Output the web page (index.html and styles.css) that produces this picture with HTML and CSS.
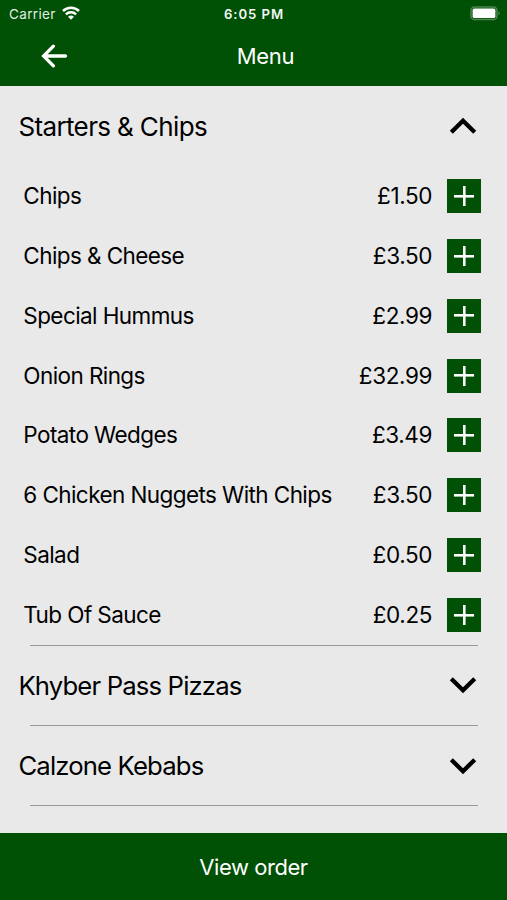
FILE: index.html
```html
<!DOCTYPE html>
<html lang="en">
<head>
<meta charset="utf-8">
<title>Menu</title>
<link rel="stylesheet" href="styles.css">
</head>
<body>
<header class="top">
  <div class="status">
    <div class="carrier"><span class="carrier-name">Carrier</span>
      <svg class="wifi" width="18" height="14" viewBox="0 0 18 14"><g fill="none" stroke="#fff" stroke-width="2.5"><path d="M1 5a11.5 11.5 0 0 1 16 0"/><path d="M3.9 8.3a7.4 7.4 0 0 1 10.2 0"/></g><path d="M9 13.8 6 10.8a4.4 4.4 0 0 1 6 0z" fill="#fff"/></svg>
    </div>
    <time class="clock">6:05 PM</time>
    <svg class="battery" width="31" height="15" viewBox="0 0 31 15"><rect x="1" y="1" width="26" height="12.6" rx="3.6" fill="none" stroke="#4d8751" stroke-width="1.5"/><rect x="2.6" y="2.6" width="22.8" height="9.4" rx="1.6" fill="#fff"/><path d="M28.5 5q2.6 2.3 0 4.6z" fill="#4d8751"/></svg>
  </div>
  <div class="nav">
    <svg class="back" width="28" height="24" viewBox="0 0 28 24"><path d="M25.5 12H4M13.4 2.2 3.6 12l9.8 9.8" fill="none" stroke="#fff" stroke-width="3.3" stroke-linecap="round"/></svg>
    <h1 class="title">Menu</h1>
  </div>
</header>
<main class="menu">
  <section class="group open">
    <h2 class="heading starters"><span>Starters &amp; Chips</span><svg class="chevron" width="28" height="18" viewBox="0 0 28 18"><path d="M2.3 15.3 14 3.8 25.7 15.3" fill="none" stroke="#000" stroke-width="4.3"/></svg></h2>
    <ul class="items">
      <li class="item"><span class="name">Chips</span><span class="price">£1.50</span><button class="add" aria-label="Add"></button></li>
      <li class="item"><span class="name">Chips &amp; Cheese</span><span class="price">£3.50</span><button class="add" aria-label="Add"></button></li>
      <li class="item"><span class="name">Special Hummus</span><span class="price">£2.99</span><button class="add" aria-label="Add"></button></li>
      <li class="item"><span class="name">Onion Rings</span><span class="price">£32.99</span><button class="add" aria-label="Add"></button></li>
      <li class="item"><span class="name">Potato Wedges</span><span class="price">£3.49</span><button class="add" aria-label="Add"></button></li>
      <li class="item"><span class="name">6 Chicken Nuggets With Chips</span><span class="price">£3.50</span><button class="add" aria-label="Add"></button></li>
      <li class="item"><span class="name">Salad</span><span class="price">£0.50</span><button class="add" aria-label="Add"></button></li>
      <li class="item"><span class="name">Tub Of Sauce</span><span class="price">£0.25</span><button class="add" aria-label="Add"></button></li>
    </ul>
  </section>
  <section class="group"><h2 class="heading"><span>Khyber Pass Pizzas</span><svg class="chevron" width="28" height="18" viewBox="0 0 28 18"><path d="M2.3 2.7 14 14.2 25.7 2.7" fill="none" stroke="#000" stroke-width="4.3"/></svg></h2></section>
  <section class="group"><h2 class="heading"><span>Calzone Kebabs</span><svg class="chevron" width="28" height="18" viewBox="0 0 28 18"><path d="M2.3 2.7 14 14.2 25.7 2.7" fill="none" stroke="#000" stroke-width="4.3"/></svg></h2></section>
</main>
<footer class="order">View order</footer>
</body>
</html>
```
FILE: styles.css
```css
* { box-sizing: border-box; }
body { margin: 0; height: 900px; display: flex; flex-direction: column; overflow: hidden; background: #e9e9e9; color: #000; font-family: Inter, "Liberation Sans", sans-serif; }
.top { height: 86px; background: #005005; color: #fff; flex: none; }
.status { height: 27px; display: grid; grid-template-columns: 1fr auto 1fr; align-items: center; padding: 0 7px 0 9px; }
.carrier { display: flex; align-items: center; gap: 6px; font-size: 13.5px; letter-spacing: .35px; color: #e2eee2; }
.wifi { margin-top: -1px; }
.clock { font-size: 13.2px; font-weight: 600; letter-spacing: .9px; margin-left: -1px; color: #f2f8f2; }
.battery { justify-self: end; margin: -1px -1px 0 0; }
.nav { height: 58px; display: grid; grid-template-columns: 68px 1fr 44px; align-items: center; }
.back { margin-left: 40px; }
.title { margin: 0; text-align: center; font-size: 22px; font-weight: 400; letter-spacing: -.3px; }
.menu { flex: 1; padding-top: .4px; }
.group { height: 80.2px; }
.group.open { height: 559px; }
.heading { margin: 0; height: 80.2px; padding: 0 30px 0 18.4px; display: flex; align-items: center; justify-content: space-between; font-size: 25.7px; font-weight: 400; letter-spacing: -.85px; }
.heading.starters { font-size: 26px; letter-spacing: -.63px; height: 79.7px; }
.group::after { content: ""; display: block; height: 1px; margin: -1px 29px 0 30px; background: #999; }
.group.open::after { margin-top: 0; }
.items { list-style: none; margin: 0; padding: 0; }
.item { height: 59.85px; padding: 0 26px 0 23.3px; display: flex; align-items: center; font-size: 22.5px; letter-spacing: -.4px; }
.name { flex: 1; letter-spacing: -.58px; }
.name, .price { padding-bottom: 1px; }
.add { width: 34px; height: 34px; margin-left: 15px; border: 0; background: linear-gradient(#fff,#fff) center / 20px 2.6px no-repeat, linear-gradient(#fff,#fff) center / 2.6px 20px no-repeat, #005005; }
.order { height: 67px; flex: none; background: #005005; color: #fff; display: flex; align-items: center; justify-content: center; font-size: 22px; letter-spacing: -.45px; }
```
